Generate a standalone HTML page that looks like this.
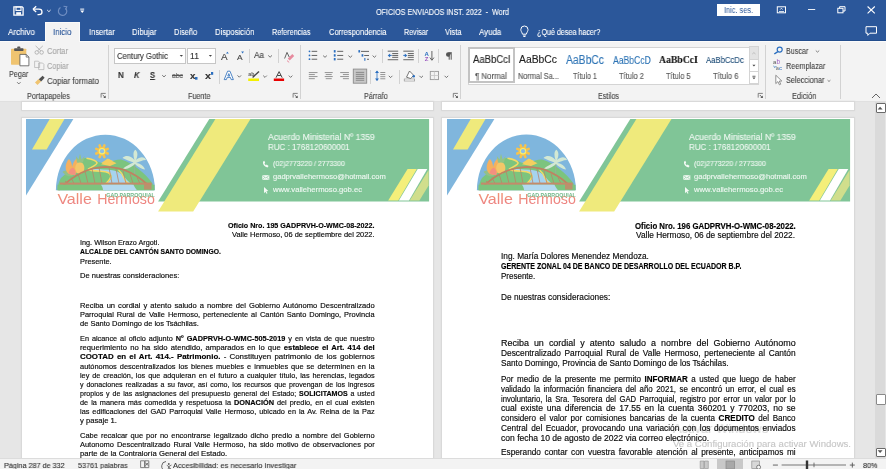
<!DOCTYPE html>
<html><head><meta charset="utf-8"><style>
*{margin:0;padding:0;box-sizing:border-box}
html,body{width:886px;height:469px;overflow:hidden}
body{position:relative;background:#e6e6e6;font-family:"Liberation Sans",sans-serif;color:#444}
.a{position:absolute;white-space:pre;will-change:transform}
.ln{position:absolute;white-space:nowrap;color:#1a1a1a;font-family:"Liberation Sans",sans-serif}
.j{text-align:justify;text-align-last:justify;white-space:normal;overflow:hidden}
.ln b{font-weight:bold;color:#000}
svg{position:absolute;overflow:visible}
</style></head><body>
<div class="a" style="left:0px;top:0px;width:886px;height:41px;background:#2b579a;"></div>
<div class="a" style="left:0px;top:40px;width:886px;height:1px;background:#224d8c;"></div>
<div class="a" style="left:0px;top:41px;width:886px;height:60px;background:#f3f3f3;"></div>
<div class="a" style="left:0px;top:41px;width:886px;height:1px;background:#fbfbfb;"></div>
<div class="a" style="left:45px;top:22px;width:35px;height:20px;background:#f3f3f3;border:1px solid #fafafa;border-bottom:none;"></div>
<div class="a" style="left:0px;top:101px;width:886px;height:1px;background:#e0e0e0;"></div>
<div class="a" style="left:376.00px;top:6.82px;font-size:9px;line-height:10.80px;color:#fff;font-family:'Liberation Sans',sans-serif;-webkit-text-stroke:0.12px #fff;transform:scaleX(0.7946);transform-origin:0 0;">OFICIOS ENVIADOS INST. 2022  -  Word</div>
<div class="a" style="left:717px;top:4px;width:43px;height:12px;background:#fff;"></div>
<div class="a" style="left:724.00px;top:5.21px;font-size:8.5px;line-height:10.20px;color:#2b579a;font-family:'Liberation Sans',sans-serif;transform:scaleX(0.8647);transform-origin:0 0;">Inic. ses.</div>
<div class="a" style="left:8.10px;top:26.88px;font-size:8.9px;line-height:10.68px;color:#fff;font-family:'Liberation Sans',sans-serif;-webkit-text-stroke:0.12px #fff;transform:scaleX(0.9064);transform-origin:0 0;">Archivo</div>
<div class="a" style="left:88.50px;top:26.88px;font-size:8.9px;line-height:10.68px;color:#fff;font-family:'Liberation Sans',sans-serif;-webkit-text-stroke:0.12px #fff;transform:scaleX(0.8551);transform-origin:0 0;">Insertar</div>
<div class="a" style="left:131.70px;top:26.88px;font-size:8.9px;line-height:10.68px;color:#fff;font-family:'Liberation Sans',sans-serif;-webkit-text-stroke:0.12px #fff;transform:scaleX(0.8689);transform-origin:0 0;">Dibujar</div>
<div class="a" style="left:173.70px;top:26.88px;font-size:8.9px;line-height:10.68px;color:#fff;font-family:'Liberation Sans',sans-serif;-webkit-text-stroke:0.12px #fff;transform:scaleX(0.8374);transform-origin:0 0;">Diseño</div>
<div class="a" style="left:214.60px;top:26.88px;font-size:8.9px;line-height:10.68px;color:#fff;font-family:'Liberation Sans',sans-serif;-webkit-text-stroke:0.12px #fff;transform:scaleX(0.8679);transform-origin:0 0;">Disposición</div>
<div class="a" style="left:271.80px;top:26.88px;font-size:8.9px;line-height:10.68px;color:#fff;font-family:'Liberation Sans',sans-serif;-webkit-text-stroke:0.12px #fff;transform:scaleX(0.8128);transform-origin:0 0;">Referencias</div>
<div class="a" style="left:328.50px;top:26.88px;font-size:8.9px;line-height:10.68px;color:#fff;font-family:'Liberation Sans',sans-serif;-webkit-text-stroke:0.12px #fff;transform:scaleX(0.8483);transform-origin:0 0;">Correspondencia</div>
<div class="a" style="left:403.90px;top:26.88px;font-size:8.9px;line-height:10.68px;color:#fff;font-family:'Liberation Sans',sans-serif;-webkit-text-stroke:0.12px #fff;transform:scaleX(0.7988);transform-origin:0 0;">Revisar</div>
<div class="a" style="left:445.00px;top:26.88px;font-size:8.9px;line-height:10.68px;color:#fff;font-family:'Liberation Sans',sans-serif;-webkit-text-stroke:0.12px #fff;transform:scaleX(0.8407);transform-origin:0 0;">Vista</div>
<div class="a" style="left:478.80px;top:26.88px;font-size:8.9px;line-height:10.68px;color:#fff;font-family:'Liberation Sans',sans-serif;-webkit-text-stroke:0.12px #fff;transform:scaleX(0.8893);transform-origin:0 0;">Ayuda</div>
<div class="a" style="left:536.70px;top:26.88px;font-size:8.9px;line-height:10.68px;color:#fff;font-family:'Liberation Sans',sans-serif;-webkit-text-stroke:0.12px #fff;transform:scaleX(0.8072);transform-origin:0 0;">¿Qué desea hacer?</div>
<div class="a" style="left:52.50px;top:26.88px;font-size:8.9px;line-height:10.68px;color:#2b579a;font-family:'Liberation Sans',sans-serif;-webkit-text-stroke:0.12px #2b579a;transform:scaleX(0.8952);transform-origin:0 0;">Inicio</div>
<div class="a" style="left:9.00px;top:68.54px;font-size:8.8px;line-height:10.56px;color:#444;font-family:'Liberation Sans',sans-serif;-webkit-text-stroke:0.12px #444;transform:scaleX(0.8261);transform-origin:0 0;">Pegar</div>
<div class="a" style="left:47.00px;top:46.04px;font-size:8.8px;line-height:10.56px;color:#a6a6a6;font-family:'Liberation Sans',sans-serif;-webkit-text-stroke:0.12px #a6a6a6;transform:scaleX(0.8589);transform-origin:0 0;">Cortar</div>
<div class="a" style="left:47.00px;top:60.84px;font-size:8.8px;line-height:10.56px;color:#a6a6a6;font-family:'Liberation Sans',sans-serif;-webkit-text-stroke:0.12px #a6a6a6;transform:scaleX(0.8293);transform-origin:0 0;">Copiar</div>
<div class="a" style="left:47.00px;top:75.84px;font-size:8.8px;line-height:10.56px;color:#444;font-family:'Liberation Sans',sans-serif;-webkit-text-stroke:0.12px #444;transform:scaleX(0.8934);transform-origin:0 0;">Copiar formato</div>
<div class="a" style="left:27.00px;top:91.16px;font-size:8.6px;line-height:10.32px;color:#444;font-family:'Liberation Sans',sans-serif;-webkit-text-stroke:0.12px #444;transform:scaleX(0.8484);transform-origin:0 0;">Portapapeles</div>
<div class="a" style="left:188.30px;top:91.16px;font-size:8.6px;line-height:10.32px;color:#444;font-family:'Liberation Sans',sans-serif;-webkit-text-stroke:0.12px #444;transform:scaleX(0.8403);transform-origin:0 0;">Fuente</div>
<div class="a" style="left:363.90px;top:91.16px;font-size:8.6px;line-height:10.32px;color:#444;font-family:'Liberation Sans',sans-serif;-webkit-text-stroke:0.12px #444;transform:scaleX(0.8368);transform-origin:0 0;">Párrafo</div>
<div class="a" style="left:597.70px;top:91.16px;font-size:8.6px;line-height:10.32px;color:#444;font-family:'Liberation Sans',sans-serif;-webkit-text-stroke:0.12px #444;transform:scaleX(0.8251);transform-origin:0 0;">Estilos</div>
<div class="a" style="left:791.70px;top:91.16px;font-size:8.6px;line-height:10.32px;color:#444;font-family:'Liberation Sans',sans-serif;-webkit-text-stroke:0.12px #444;transform:scaleX(0.8615);transform-origin:0 0;">Edición</div>
<div class="a" style="left:785.60px;top:46.34px;font-size:8.8px;line-height:10.56px;color:#444;font-family:'Liberation Sans',sans-serif;-webkit-text-stroke:0.12px #444;transform:scaleX(0.8178);transform-origin:0 0;">Buscar</div>
<div class="a" style="left:785.60px;top:61.24px;font-size:8.8px;line-height:10.56px;color:#444;font-family:'Liberation Sans',sans-serif;-webkit-text-stroke:0.12px #444;transform:scaleX(0.8305);transform-origin:0 0;">Reemplazar</div>
<div class="a" style="left:785.60px;top:75.44px;font-size:8.8px;line-height:10.56px;color:#444;font-family:'Liberation Sans',sans-serif;-webkit-text-stroke:0.12px #444;transform:scaleX(0.8351);transform-origin:0 0;">Seleccionar</div>
<div class="a" style="left:114px;top:48px;width:72px;height:16px;background:#fff;border:1px solid #c6c6c6;"></div>
<div class="a" style="left:187px;top:48px;width:29px;height:16px;background:#fff;border:1px solid #c6c6c6;"></div>
<div class="a" style="left:116.50px;top:50.96px;font-size:8.6px;line-height:10.32px;color:#333;font-family:'Liberation Sans',sans-serif;-webkit-text-stroke:0.12px #333;transform:scaleX(0.8892);transform-origin:0 0;">Century Gothic</div>
<div class="a" style="left:189.80px;top:51.16px;font-size:8.6px;line-height:10.32px;color:#333;font-family:'Liberation Sans',sans-serif;-webkit-text-stroke:0.12px #333;">11</div>
<div class="a" style="left:108px;top:45px;width:1px;height:54px;background:#d2d2d2;"></div>
<div class="a" style="left:300px;top:45px;width:1px;height:54px;background:#d2d2d2;"></div>
<div class="a" style="left:460px;top:45px;width:1px;height:54px;background:#d2d2d2;"></div>
<div class="a" style="left:765px;top:45px;width:1px;height:54px;background:#d2d2d2;"></div>
<div class="a" style="left:840px;top:45px;width:1px;height:54px;background:#d2d2d2;"></div>
<div class="a" style="left:249px;top:49px;width:1px;height:14px;background:#d2d2d2;"></div>
<div class="a" style="left:278px;top:49px;width:1px;height:14px;background:#d2d2d2;"></div>
<div class="a" style="left:219px;top:70px;width:1px;height:14px;background:#d2d2d2;"></div>
<div class="a" style="left:382px;top:49px;width:1px;height:14px;background:#d2d2d2;"></div>
<div class="a" style="left:418px;top:49px;width:1px;height:14px;background:#d2d2d2;"></div>
<div class="a" style="left:438px;top:49px;width:1px;height:14px;background:#d2d2d2;"></div>
<div class="a" style="left:370px;top:70px;width:1px;height:14px;background:#d2d2d2;"></div>
<div class="a" style="left:399px;top:70px;width:1px;height:14px;background:#d2d2d2;"></div>
<div class="a" style="left:467.6px;top:46.6px;width:291.4px;height:37.800000000000004px;background:#fff;border:1px solid #d4d4d4;"></div>
<div class="a" style="left:468px;top:47px;width:47px;height:36px;background:transparent;border:2px solid #c3c3c3;"></div>
<div class="a" style="left:749px;top:46px;width:10px;height:14px;background:#e3e3e3;border:1px solid #d4d4d4;"></div>
<div class="a" style="left:749px;top:59px;width:10px;height:13px;background:#fff;border:1px solid #d4d4d4;"></div>
<div class="a" style="left:749px;top:71px;width:10px;height:13px;background:#fff;border:1px solid #d4d4d4;"></div>
<div class="a" style="left:472.50px;top:53.73px;font-size:10px;line-height:12.00px;color:#222;font-family:'Liberation Sans',sans-serif;-webkit-text-stroke:0.12px #222;transform:scaleX(0.9502);transform-origin:0 0;">AaBbCcI</div>
<div class="a" style="left:519.00px;top:54.14px;font-size:10px;line-height:12.00px;color:#222;font-family:'Liberation Sans',sans-serif;-webkit-text-stroke:0.12px #222;transform:scaleX(1.0358);transform-origin:0 0;">AaBbCc</div>
<div class="a" style="left:566.00px;top:52.67px;font-size:12.5px;line-height:15.00px;color:#2e74b5;font-family:'Liberation Sans',sans-serif;-webkit-text-stroke:0.12px #2e74b5;transform:scaleX(0.8287);transform-origin:0 0;">AaBbCc</div>
<div class="a" style="left:612.80px;top:53.84px;font-size:10.5px;line-height:12.60px;color:#2e74b5;font-family:'Liberation Sans',sans-serif;-webkit-text-stroke:0.12px #2e74b5;transform:scaleX(0.8199);transform-origin:0 0;">AaBbCcD</div>
<div class="a" style="left:659.20px;top:52.92px;font-size:11px;line-height:13.20px;color:#111;font-family:'Liberation Serif',serif;font-weight:bold;-webkit-text-stroke:0.12px #111;transform:scaleX(0.8817);transform-origin:0 0;">AaBbCcI</div>
<div class="a" style="left:706.20px;top:54.43px;font-size:9.5px;line-height:11.40px;color:#1f4d78;font-family:'Liberation Sans',sans-serif;-webkit-text-stroke:0.12px #1f4d78;transform:scaleX(0.8136);transform-origin:0 0;">AaBbCcDc</div>
<div class="a" style="left:475.00px;top:71.07px;font-size:8.4px;line-height:10.08px;color:#555;font-family:'Liberation Sans',sans-serif;-webkit-text-stroke:0.12px #555;transform:scaleX(0.9435);transform-origin:0 0;">¶ Normal</div>
<div class="a" style="left:518.00px;top:71.07px;font-size:8.4px;line-height:10.08px;color:#555;font-family:'Liberation Sans',sans-serif;-webkit-text-stroke:0.12px #555;transform:scaleX(0.8783);transform-origin:0 0;">Normal Sa...</div>
<div class="a" style="left:573.00px;top:71.07px;font-size:8.4px;line-height:10.08px;color:#555;font-family:'Liberation Sans',sans-serif;-webkit-text-stroke:0.12px #555;transform:scaleX(0.8567);transform-origin:0 0;">Título 1</div>
<div class="a" style="left:619.00px;top:71.07px;font-size:8.4px;line-height:10.08px;color:#555;font-family:'Liberation Sans',sans-serif;-webkit-text-stroke:0.12px #555;transform:scaleX(0.8924);transform-origin:0 0;">Título 2</div>
<div class="a" style="left:666.00px;top:71.07px;font-size:8.4px;line-height:10.08px;color:#555;font-family:'Liberation Sans',sans-serif;-webkit-text-stroke:0.12px #555;transform:scaleX(0.8781);transform-origin:0 0;">Título 5</div>
<div class="a" style="left:712.50px;top:71.07px;font-size:8.4px;line-height:10.08px;color:#555;font-family:'Liberation Sans',sans-serif;-webkit-text-stroke:0.12px #555;transform:scaleX(0.9103);transform-origin:0 0;">Título 6</div>
<div class="a" style="left:21.5px;top:102px;width:410.5px;height:7.5px;background:#fff;box-shadow:0 0 0 1px #d9d9d9,0 0 1.5px 1px #dcdcdc;"></div>
<div class="a" style="left:21.5px;top:117.5px;width:410.5px;height:362.5px;background:#fff;box-shadow:0 0 0 1px #d9d9d9,0 0 1.5px 1px #dcdcdc;"></div>
<div class="a" style="left:442px;top:102px;width:411.5px;height:7.5px;background:#fff;box-shadow:0 0 0 1px #d9d9d9,0 0 1.5px 1px #dcdcdc;"></div>
<div class="a" style="left:442px;top:117.5px;width:411.5px;height:362.5px;background:#fff;box-shadow:0 0 0 1px #d9d9d9,0 0 1.5px 1px #dcdcdc;"></div>
<div class="a" style="left:875px;top:102px;width:10px;height:356px;background:#dadada;"></div>
<div class="a" style="left:875.5px;top:393.6px;width:10.0px;height:11.399999999999977px;background:#fff;border:1px solid #8a8a8a;border-radius:1px;"></div>
<div class="a" style="left:875.5px;top:103.2px;width:10.0px;height:9.599999999999994px;background:#fff;border:1px solid #6a6a6a;border-radius:1px;"></div>
<div class="a" style="left:875.5px;top:447.6px;width:10.0px;height:9.0px;background:#fff;border:1px solid #6a6a6a;border-radius:1px;"></div>
<div class="a" style="left:672.50px;top:421.02px;font-size:13.6px;line-height:16.32px;color:#d9d9d9;font-family:'Liberation Sans',sans-serif;-webkit-text-stroke:0.12px #d9d9d9;transform:scaleX(0.9481);transform-origin:0 0;">Activar Windows</div>
<div class="a" style="left:672.70px;top:438.94px;font-size:8.8px;line-height:10.56px;color:#c6c6c6;font-family:'Liberation Sans',sans-serif;-webkit-text-stroke:0.12px #c6c6c6;transform:scaleX(1.0901);transform-origin:0 0;">Ve a Configuración para activar Windows.</div>
<svg style="left:0;top:0" width="886" height="469" viewBox="0 0 886 469"><polygon points="26.0,119.0 73.4,119.0 26.0,195.5" fill="#80b6dd"/><polygon points="49.7,119.0 64.5,119.0 46.6,149.4 32.0,149.4" fill="#efea7c"/><polygon points="209.3,119.0 429.1,119.0 429.1,201.6 158.1,201.6" fill="#80c597"/><polygon points="215.4,119.0 250.5,119.0 193.2,211.4 158.1,211.4" fill="#efea7c"/><polygon points="407.6,169.0 416.8,169.0 398.2,200.4 388.2,200.4" fill="#f4ef7a"/><polygon points="417.7,169.0 427.3,169.0 409.0,200.4 398.9,200.4" fill="#ffffff"/><polygon points="428.6,169.9 428.6,185.6 419.4,200.4 409.7,200.4" fill="#d0de8c"/><path d="M55.9,190.2 A49.5,55.6 0 0 1 154.9,190.2 Z" fill="#7fb6dd"/><path d="M 100.5,163.5 L 107.7,158.6 L 116.0,162.5 Z" fill="#f3cf5e"/><path d="M 57.5,190.2 C 58.0,185 59.0,181 61.0,178 C 70.0,170 78.0,161 85.0,158 C 90.0,158 95.0,160 100.0,162.5 L 106.0,164 C 111.0,161 116.0,159.5 121.0,159.5 C 133.0,163 145.0,173 152.5,183.5 L 154.2,190.2 Z" fill="#7cc47e"/><path d="M 90.0,170.5 C 97.0,171.5 104.0,171 108.0,172.5 C 112.0,174 113.0,177 110.0,180 C 107.0,183 104.0,186 103.0,190.2 L 137.0,190.2 C 134.0,186 130.0,183 127.0,180 C 124.0,176 120.0,172 114.0,170.5 C 108.0,169.5 100.0,169 91.0,169 Z" fill="#a6d3ef"/><path d="M 86.5,158.3 C 91.0,159 96.0,160.5 97.0,162.8 C 97.5,165 90.0,167.5 88.5,169 C 88.0,170.5 95.0,171 101.0,171.2 C 108.0,171.4 111.0,173.5 110.8,176.5 C 110.5,180 106.0,183 104.0,186 C 103.0,188 102.6,189.5 102.6,190.2" stroke="#f5da66" stroke-width="1.6" fill="none"/><path d="M 118.5,170 C 121.0,172 123.0,175 124.0,178 C 125.0,181 127.0,183 129.0,184" stroke="#f5da66" stroke-width="1.4" fill="none"/><line x1="102" y1="151.2" x2="107.73" y2="153.57" stroke="#f6c34e" stroke-width="2.6" stroke-linecap="round"/><line x1="102" y1="151.2" x2="104.37" y2="156.93" stroke="#f6c34e" stroke-width="2.6" stroke-linecap="round"/><line x1="102" y1="151.2" x2="99.63" y2="156.93" stroke="#f6c34e" stroke-width="2.6" stroke-linecap="round"/><line x1="102" y1="151.2" x2="96.27" y2="153.57" stroke="#f6c34e" stroke-width="2.6" stroke-linecap="round"/><line x1="102" y1="151.2" x2="96.27" y2="148.83" stroke="#f6c34e" stroke-width="2.6" stroke-linecap="round"/><line x1="102" y1="151.2" x2="99.63" y2="145.47" stroke="#f6c34e" stroke-width="2.6" stroke-linecap="round"/><line x1="102" y1="151.2" x2="104.37" y2="145.47" stroke="#f6c34e" stroke-width="2.6" stroke-linecap="round"/><line x1="102" y1="151.2" x2="107.73" y2="148.83" stroke="#f6c34e" stroke-width="2.6" stroke-linecap="round"/><circle cx="102" cy="151.2" r="4.3" fill="#f6c34e"/><circle cx="102" cy="151.2" r="3.2" fill="#fbf06a"/><circle cx="102" cy="151.2" r="2.1" fill="#8fc0e4"/><path d="M 101.0,164.2 L 108.5,159 L 116.5,163.2 L 110.0,166 Z" fill="#f4cf5f"/><path d="M 62.5,172 C 65.0,169.5 70.0,170 74.0,174 C 72.0,177.5 66.0,177 62.5,172 Z" fill="#93c087"/><path d="M 66.0,170 C 65.0,165 67.0,161 69.0,159 C 71.0,161 72.0,164 72.0,167 C 73.0,163 75.0,159.5 77.0,158 C 78.0,162 78.0,168 77.0,172 C 75.0,176 68.0,176 66.0,170 Z" fill="#f5b05e"/><path d="M 68.5,173.5 C 69.0,170 71.0,168 73.0,167.5 C 75.0,169 76.0,172 75.5,175.5 Z" fill="#f39080"/><ellipse cx="79.8" cy="168" rx="4.6" ry="6" fill="#f4c768"/><path d="M 77.0,162.5 L 75.8,156 L 78.6,159.5 L 80.0,153.8 L 81.6,159.5 L 84.6,156 L 83.0,162.5 Z" fill="#93c486"/><path d="M 134.5,175 L 134.8,160" stroke="#8fb58f" stroke-width="1.4"/><path d="M 122.5,158 C 126.0,154.5 131.0,156 134.5,160 C 133.0,155 133.0,151 135.5,149.8 C 138.0,152 138.0,156 136.0,160 C 140.0,156 145.0,156.5 146.0,160 C 142.0,160 139.0,162 136.0,163 C 140.0,163 144.0,166 145.0,169.5 C 141.0,169 137.0,166 135.0,164 C 132.0,167 127.0,170 123.0,168.5 C 126.0,166 130.0,164 133.5,162.5 C 130.0,161 126.0,160 122.5,158 Z" fill="#d3e8d3"/><line x1="68" y1="183.5" x2="65" y2="181" stroke="#b98266" stroke-width="0.75"/><line x1="74" y1="183.5" x2="71" y2="177.5" stroke="#b98266" stroke-width="0.75"/><line x1="81" y1="183.5" x2="78" y2="173.8" stroke="#b98266" stroke-width="0.75"/><line x1="88" y1="183.5" x2="85" y2="171" stroke="#b98266" stroke-width="0.75"/><line x1="95" y1="183.5" x2="92" y2="168.8" stroke="#b98266" stroke-width="0.75"/><line x1="102" y1="183.5" x2="99" y2="167.5" stroke="#b98266" stroke-width="0.75"/><line x1="112" y1="183.5" x2="109" y2="167.5" stroke="#b98266" stroke-width="0.75"/><line x1="119" y1="183.5" x2="116" y2="168.8" stroke="#b98266" stroke-width="0.75"/><line x1="126" y1="183.5" x2="123" y2="171" stroke="#b98266" stroke-width="0.75"/><line x1="133" y1="183.5" x2="130" y2="173.8" stroke="#b98266" stroke-width="0.75"/><line x1="140" y1="183.5" x2="137" y2="177.5" stroke="#b98266" stroke-width="0.75"/><line x1="146" y1="183.5" x2="143" y2="181" stroke="#b98266" stroke-width="0.75"/><path d="M 58.5,190 C 72.0,176 88.0,167 106.0,166.8 C 124.0,167 140.0,176 152.5,189.5" stroke="#bf8262" stroke-width="1.8" fill="none"/><rect x="60" y="182.6" width="91.5" height="2.2" fill="#c48a6a"/><rect x="57.5" y="184.8" width="97" height="5.4" fill="#7cc47e"/><path d="M 101.0,184.8 C 102.5,187 103.0,188.5 103.0,190.2 L 137.0,190.2 C 135.0,188 134.0,186 133.5,184.8 Z" fill="#b2d9f0"/><rect x="144" y="183" width="7.5" height="6.5" fill="#c48a6a" opacity="0.85"/><path d="M 263.2,161.5 C 262.3,163.5 264.0,166.5 267.5,167.5 L 268.6,166 L 266.6,164.6 L 265.8,165.2 C 265.0,164.7 264.6,164 264.5,163.3 L 265.2,162.6 L 264.2,160.8 Z" fill="#f4faf5"/><path d="M 262.3,175.2 L 269.3,175.2 L 269.3,179.8 L 262.3,179.8 Z" fill="#f4faf5"/><path d="M 262.5,175.5 L 265.8,178 L 269.1,175.5 M 262.5,179.5 L 264.8,177.4 M 269.1,179.5 L 266.8,177.4" stroke="#80c597" stroke-width="0.6" fill="none"/><path d="M 264.0,187 L 264.0,193.3 L 265.4,191.7 L 266.6,193.8 L 267.5,193.3 L 266.4,191.3 L 268.3,191 Z" fill="#f4faf5"/><defs><linearGradient id="vh0" x1="0" y1="0" x2="0" y2="1"><stop offset="0" stop-color="#f29a74"/><stop offset="1" stop-color="#ec7c84"/></linearGradient></defs><text x="57.4" y="203.6" font-family="Liberation Sans" font-size="14.6" fill="url(#vh0)" textLength="34.4" lengthAdjust="spacingAndGlyphs">Valle</text><text x="97.2" y="203.6" font-family="Liberation Sans" font-size="14.6" fill="url(#vh0)" textLength="57.6" lengthAdjust="spacingAndGlyphs">Hermoso</text><text x="106.3" y="196.5" font-family="Liberation Sans" font-weight="bold" font-size="5.4" fill="#72b98a" textLength="48.5" lengthAdjust="spacingAndGlyphs">GAD PARROQUIAL</text></svg>
<div class="a" style="left:267.50px;top:131.78px;font-size:8.9px;line-height:10.68px;color:#eef7f1;font-family:'Liberation Sans',sans-serif;-webkit-text-stroke:0.12px #eef7f1;transform:scaleX(0.9736);transform-origin:0 0;">Acuerdo Ministerial Nº 1359</div>
<div class="a" style="left:267.50px;top:141.88px;font-size:8.9px;line-height:10.68px;color:#eef7f1;font-family:'Liberation Sans',sans-serif;-webkit-text-stroke:0.12px #eef7f1;transform:scaleX(0.8995);transform-origin:0 0;">RUC : 1768120600001</div>
<div class="a" style="left:273.40px;top:159.98px;font-size:7.2px;line-height:8.64px;color:#eef7f1;font-family:'Liberation Sans',sans-serif;-webkit-text-stroke:0.12px #eef7f1;transform:scaleX(0.9617);transform-origin:0 0;">(02)2773220 / 2773300</div>
<div class="a" style="left:273.00px;top:172.78px;font-size:7.2px;line-height:8.64px;color:#eef7f1;font-family:'Liberation Sans',sans-serif;-webkit-text-stroke:0.12px #eef7f1;transform:scaleX(1.0516);transform-origin:0 0;">gadprvallehermoso@hotmail.com</div>
<div class="a" style="left:273.00px;top:185.58px;font-size:7.2px;line-height:8.64px;color:#eef7f1;font-family:'Liberation Sans',sans-serif;-webkit-text-stroke:0.12px #eef7f1;transform:scaleX(1.0664);transform-origin:0 0;">www.vallehermoso.gob.ec</div>
<svg style="left:0;top:0" width="886" height="469" viewBox="0 0 886 469"><polygon points="447.0,119.0 494.4,119.0 447.0,195.5" fill="#80b6dd"/><polygon points="470.7,119.0 485.5,119.0 467.6,149.4 453.0,149.4" fill="#efea7c"/><polygon points="630.3,119.0 850.1,119.0 850.1,201.6 579.1,201.6" fill="#80c597"/><polygon points="636.4,119.0 671.5,119.0 614.2,211.4 579.1,211.4" fill="#efea7c"/><polygon points="828.6,169.0 837.8,169.0 819.2,200.4 809.2,200.4" fill="#f4ef7a"/><polygon points="838.7,169.0 848.3,169.0 830.0,200.4 819.9,200.4" fill="#ffffff"/><polygon points="849.6,169.9 849.6,185.6 840.4,200.4 830.7,200.4" fill="#d0de8c"/><path d="M476.9,190.2 A49.5,55.6 0 0 1 575.9,190.2 Z" fill="#7fb6dd"/><path d="M 521.5,163.5 L 528.7,158.6 L 537.0,162.5 Z" fill="#f3cf5e"/><path d="M 478.5,190.2 C 479.0,185 480.0,181 482.0,178 C 491.0,170 499.0,161 506.0,158 C 511.0,158 516.0,160 521.0,162.5 L 527.0,164 C 532.0,161 537.0,159.5 542.0,159.5 C 554.0,163 566.0,173 573.5,183.5 L 575.2,190.2 Z" fill="#7cc47e"/><path d="M 511.0,170.5 C 518.0,171.5 525.0,171 529.0,172.5 C 533.0,174 534.0,177 531.0,180 C 528.0,183 525.0,186 524.0,190.2 L 558.0,190.2 C 555.0,186 551.0,183 548.0,180 C 545.0,176 541.0,172 535.0,170.5 C 529.0,169.5 521.0,169 512.0,169 Z" fill="#a6d3ef"/><path d="M 507.5,158.3 C 512.0,159 517.0,160.5 518.0,162.8 C 518.5,165 511.0,167.5 509.5,169 C 509.0,170.5 516.0,171 522.0,171.2 C 529.0,171.4 532.0,173.5 531.8,176.5 C 531.5,180 527.0,183 525.0,186 C 524.0,188 523.6,189.5 523.6,190.2" stroke="#f5da66" stroke-width="1.6" fill="none"/><path d="M 539.5,170 C 542.0,172 544.0,175 545.0,178 C 546.0,181 548.0,183 550.0,184" stroke="#f5da66" stroke-width="1.4" fill="none"/><line x1="523" y1="151.2" x2="528.73" y2="153.57" stroke="#f6c34e" stroke-width="2.6" stroke-linecap="round"/><line x1="523" y1="151.2" x2="525.37" y2="156.93" stroke="#f6c34e" stroke-width="2.6" stroke-linecap="round"/><line x1="523" y1="151.2" x2="520.63" y2="156.93" stroke="#f6c34e" stroke-width="2.6" stroke-linecap="round"/><line x1="523" y1="151.2" x2="517.27" y2="153.57" stroke="#f6c34e" stroke-width="2.6" stroke-linecap="round"/><line x1="523" y1="151.2" x2="517.27" y2="148.83" stroke="#f6c34e" stroke-width="2.6" stroke-linecap="round"/><line x1="523" y1="151.2" x2="520.63" y2="145.47" stroke="#f6c34e" stroke-width="2.6" stroke-linecap="round"/><line x1="523" y1="151.2" x2="525.37" y2="145.47" stroke="#f6c34e" stroke-width="2.6" stroke-linecap="round"/><line x1="523" y1="151.2" x2="528.73" y2="148.83" stroke="#f6c34e" stroke-width="2.6" stroke-linecap="round"/><circle cx="523" cy="151.2" r="4.3" fill="#f6c34e"/><circle cx="523" cy="151.2" r="3.2" fill="#fbf06a"/><circle cx="523" cy="151.2" r="2.1" fill="#8fc0e4"/><path d="M 522.0,164.2 L 529.5,159 L 537.5,163.2 L 531.0,166 Z" fill="#f4cf5f"/><path d="M 483.5,172 C 486.0,169.5 491.0,170 495.0,174 C 493.0,177.5 487.0,177 483.5,172 Z" fill="#93c087"/><path d="M 487.0,170 C 486.0,165 488.0,161 490.0,159 C 492.0,161 493.0,164 493.0,167 C 494.0,163 496.0,159.5 498.0,158 C 499.0,162 499.0,168 498.0,172 C 496.0,176 489.0,176 487.0,170 Z" fill="#f5b05e"/><path d="M 489.5,173.5 C 490.0,170 492.0,168 494.0,167.5 C 496.0,169 497.0,172 496.5,175.5 Z" fill="#f39080"/><ellipse cx="500.8" cy="168" rx="4.6" ry="6" fill="#f4c768"/><path d="M 498.0,162.5 L 496.8,156 L 499.6,159.5 L 501.0,153.8 L 502.6,159.5 L 505.6,156 L 504.0,162.5 Z" fill="#93c486"/><path d="M 555.5,175 L 555.8,160" stroke="#8fb58f" stroke-width="1.4"/><path d="M 543.5,158 C 547.0,154.5 552.0,156 555.5,160 C 554.0,155 554.0,151 556.5,149.8 C 559.0,152 559.0,156 557.0,160 C 561.0,156 566.0,156.5 567.0,160 C 563.0,160 560.0,162 557.0,163 C 561.0,163 565.0,166 566.0,169.5 C 562.0,169 558.0,166 556.0,164 C 553.0,167 548.0,170 544.0,168.5 C 547.0,166 551.0,164 554.5,162.5 C 551.0,161 547.0,160 543.5,158 Z" fill="#d3e8d3"/><line x1="489" y1="183.5" x2="486" y2="181" stroke="#b98266" stroke-width="0.75"/><line x1="495" y1="183.5" x2="492" y2="177.5" stroke="#b98266" stroke-width="0.75"/><line x1="502" y1="183.5" x2="499" y2="173.8" stroke="#b98266" stroke-width="0.75"/><line x1="509" y1="183.5" x2="506" y2="171" stroke="#b98266" stroke-width="0.75"/><line x1="516" y1="183.5" x2="513" y2="168.8" stroke="#b98266" stroke-width="0.75"/><line x1="523" y1="183.5" x2="520" y2="167.5" stroke="#b98266" stroke-width="0.75"/><line x1="533" y1="183.5" x2="530" y2="167.5" stroke="#b98266" stroke-width="0.75"/><line x1="540" y1="183.5" x2="537" y2="168.8" stroke="#b98266" stroke-width="0.75"/><line x1="547" y1="183.5" x2="544" y2="171" stroke="#b98266" stroke-width="0.75"/><line x1="554" y1="183.5" x2="551" y2="173.8" stroke="#b98266" stroke-width="0.75"/><line x1="561" y1="183.5" x2="558" y2="177.5" stroke="#b98266" stroke-width="0.75"/><line x1="567" y1="183.5" x2="564" y2="181" stroke="#b98266" stroke-width="0.75"/><path d="M 479.5,190 C 493.0,176 509.0,167 527.0,166.8 C 545.0,167 561.0,176 573.5,189.5" stroke="#bf8262" stroke-width="1.8" fill="none"/><rect x="481" y="182.6" width="91.5" height="2.2" fill="#c48a6a"/><rect x="478.5" y="184.8" width="97" height="5.4" fill="#7cc47e"/><path d="M 522.0,184.8 C 523.5,187 524.0,188.5 524.0,190.2 L 558.0,190.2 C 556.0,188 555.0,186 554.5,184.8 Z" fill="#b2d9f0"/><rect x="565" y="183" width="7.5" height="6.5" fill="#c48a6a" opacity="0.85"/><path d="M 684.2,161.5 C 683.3,163.5 685.0,166.5 688.5,167.5 L 689.6,166 L 687.6,164.6 L 686.8,165.2 C 686.0,164.7 685.6,164 685.5,163.3 L 686.2,162.6 L 685.2,160.8 Z" fill="#f4faf5"/><path d="M 683.3,175.2 L 690.3,175.2 L 690.3,179.8 L 683.3,179.8 Z" fill="#f4faf5"/><path d="M 683.5,175.5 L 686.8,178 L 690.1,175.5 M 683.5,179.5 L 685.8,177.4 M 690.1,179.5 L 687.8,177.4" stroke="#80c597" stroke-width="0.6" fill="none"/><path d="M 685.0,187 L 685.0,193.3 L 686.4,191.7 L 687.6,193.8 L 688.5,193.3 L 687.4,191.3 L 689.3,191 Z" fill="#f4faf5"/><defs><linearGradient id="vh421" x1="0" y1="0" x2="0" y2="1"><stop offset="0" stop-color="#f29a74"/><stop offset="1" stop-color="#ec7c84"/></linearGradient></defs><text x="478.4" y="203.6" font-family="Liberation Sans" font-size="14.6" fill="url(#vh421)" textLength="34.4" lengthAdjust="spacingAndGlyphs">Valle</text><text x="518.2" y="203.6" font-family="Liberation Sans" font-size="14.6" fill="url(#vh421)" textLength="57.6" lengthAdjust="spacingAndGlyphs">Hermoso</text><text x="527.3" y="196.5" font-family="Liberation Sans" font-weight="bold" font-size="5.4" fill="#72b98a" textLength="48.5" lengthAdjust="spacingAndGlyphs">GAD PARROQUIAL</text></svg>
<div class="a" style="left:688.50px;top:131.78px;font-size:8.9px;line-height:10.68px;color:#eef7f1;font-family:'Liberation Sans',sans-serif;-webkit-text-stroke:0.12px #eef7f1;transform:scaleX(0.9736);transform-origin:0 0;">Acuerdo Ministerial Nº 1359</div>
<div class="a" style="left:688.50px;top:141.88px;font-size:8.9px;line-height:10.68px;color:#eef7f1;font-family:'Liberation Sans',sans-serif;-webkit-text-stroke:0.12px #eef7f1;transform:scaleX(0.8995);transform-origin:0 0;">RUC : 1768120600001</div>
<div class="a" style="left:694.40px;top:159.98px;font-size:7.2px;line-height:8.64px;color:#eef7f1;font-family:'Liberation Sans',sans-serif;-webkit-text-stroke:0.12px #eef7f1;transform:scaleX(0.9617);transform-origin:0 0;">(02)2773220 / 2773300</div>
<div class="a" style="left:694.00px;top:172.78px;font-size:7.2px;line-height:8.64px;color:#eef7f1;font-family:'Liberation Sans',sans-serif;-webkit-text-stroke:0.12px #eef7f1;transform:scaleX(1.0516);transform-origin:0 0;">gadprvallehermoso@hotmail.com</div>
<div class="a" style="left:694.00px;top:185.58px;font-size:7.2px;line-height:8.64px;color:#eef7f1;font-family:'Liberation Sans',sans-serif;-webkit-text-stroke:0.12px #eef7f1;transform:scaleX(1.0664);transform-origin:0 0;">www.vallehermoso.gob.ec</div>
<div class="ln" style="left:228.00px;top:220.77px;font-size:7.9px;line-height:9.48px;color:#0a0a0a;white-space:pre;-webkit-text-stroke:0.16px #0a0a0a;transform:scaleX(0.9034);transform-origin:0 0;"><b>Oficio Nro. 195 GADPRVH-O-WMC-08-2022.</b></div>
<div class="ln" style="left:231.90px;top:229.97px;font-size:7.9px;line-height:9.48px;color:#0a0a0a;white-space:pre;-webkit-text-stroke:0.16px #0a0a0a;transform:scaleX(0.9428);transform-origin:0 0;">Valle Hermoso, 06 de septiembre del 2022.</div>
<div class="ln" style="left:79.60px;top:237.67px;font-size:7.9px;line-height:9.48px;color:#0a0a0a;white-space:pre;-webkit-text-stroke:0.16px #0a0a0a;transform:scaleX(0.9202);transform-origin:0 0;">Ing. Wilson Erazo Argoti.</div>
<div class="ln" style="left:79.60px;top:247.27px;font-size:7.9px;line-height:9.48px;color:#0a0a0a;white-space:pre;-webkit-text-stroke:0.16px #0a0a0a;transform:scaleX(0.8588);transform-origin:0 0;"><b>ALCALDE DEL CANTÓN SANTO DOMINGO.</b></div>
<div class="ln" style="left:79.60px;top:257.27px;font-size:7.9px;line-height:9.48px;color:#0a0a0a;white-space:pre;-webkit-text-stroke:0.16px #0a0a0a;transform:scaleX(0.9375);transform-origin:0 0;">Presente.</div>
<div class="ln" style="left:79.60px;top:270.67px;font-size:7.9px;line-height:9.48px;color:#0a0a0a;white-space:pre;-webkit-text-stroke:0.16px #0a0a0a;transform:scaleX(0.9551);transform-origin:0 0;">De nuestras consideraciones:</div>
<div class="ln" style="left:79.60px;top:300.67px;font-size:7.9px;line-height:9.48px;color:#0a0a0a;white-space:pre;-webkit-text-stroke:0.16px #0a0a0a;word-spacing:1.000px;transform:scaleX(0.9595);transform-origin:0 0;">Reciba un cordial y atento saludo a nombre del Gobierno Autónomo Descentralizado</div>
<div class="ln" style="left:79.60px;top:309.97px;font-size:7.9px;line-height:9.48px;color:#0a0a0a;white-space:pre;-webkit-text-stroke:0.16px #0a0a0a;word-spacing:1.000px;transform:scaleX(0.9416);transform-origin:0 0;">Parroquial Rural de Valle Hermoso, perteneciente al Cantón Santo Domingo, Provincia</div>
<div class="ln" style="left:79.60px;top:319.17px;font-size:7.9px;line-height:9.48px;color:#0a0a0a;white-space:pre;-webkit-text-stroke:0.16px #0a0a0a;transform:scaleX(0.9478);transform-origin:0 0;">de Santo Domingo de los Tsáchilas.</div>
<div class="ln" style="left:79.60px;top:333.97px;font-size:7.9px;line-height:9.48px;color:#0a0a0a;white-space:pre;-webkit-text-stroke:0.16px #0a0a0a;word-spacing:1.000px;transform:scaleX(0.9272);transform-origin:0 0;">En alcance al oficio adjunto <b>Nº GADPRVH-O-WMC-505-2019</b> y en vista de que nuestro</div>
<div class="ln" style="left:79.60px;top:342.77px;font-size:7.9px;line-height:9.48px;color:#0a0a0a;white-space:pre;-webkit-text-stroke:0.16px #0a0a0a;word-spacing:1.000px;transform:scaleX(0.9750);transform-origin:0 0;">requerimiento no ha sido atendido, amparados en lo que <b>establece el Art. 414 del</b></div>
<div class="ln" style="left:79.60px;top:351.97px;font-size:7.9px;line-height:9.48px;color:#0a0a0a;white-space:pre;-webkit-text-stroke:0.16px #0a0a0a;word-spacing:1.000px;transform:scaleX(1.0028);transform-origin:0 0;"><b>COOTAD en el Art. 414.- Patrimonio.</b> - Constituyen patrimonio de los gobiernos</div>
<div class="ln" style="left:79.60px;top:361.57px;font-size:7.9px;line-height:9.48px;color:#0a0a0a;white-space:pre;-webkit-text-stroke:0.16px #0a0a0a;word-spacing:1.000px;transform:scaleX(0.9420);transform-origin:0 0;">autónomos descentralizados los bienes muebles e inmuebles que se determinen en la</div>
<div class="ln" style="left:79.60px;top:370.97px;font-size:7.9px;line-height:9.48px;color:#0a0a0a;white-space:pre;-webkit-text-stroke:0.16px #0a0a0a;word-spacing:1.000px;transform:scaleX(0.9241);transform-origin:0 0;">ley de creación, los que adquieran en el futuro a cualquier título, las herencias, legados</div>
<div class="ln" style="left:79.60px;top:380.17px;font-size:7.9px;line-height:9.48px;color:#0a0a0a;white-space:pre;-webkit-text-stroke:0.16px #0a0a0a;word-spacing:1.000px;transform:scaleX(0.8970);transform-origin:0 0;">y donaciones realizadas a su favor, así como, los recursos que provengan de los ingresos</div>
<div class="ln" style="left:79.60px;top:389.07px;font-size:7.9px;line-height:9.48px;color:#0a0a0a;white-space:pre;-webkit-text-stroke:0.16px #0a0a0a;word-spacing:1.000px;transform:scaleX(0.8969);transform-origin:0 0;">propios y de las asignaciones del presupuesto general del Estado; <b>SOLICITAMOS</b> a usted</div>
<div class="ln" style="left:79.60px;top:398.27px;font-size:7.9px;line-height:9.48px;color:#0a0a0a;white-space:pre;-webkit-text-stroke:0.16px #0a0a0a;word-spacing:1.000px;transform:scaleX(0.9306);transform-origin:0 0;">de la manera más comedida y respetuosa la <b>DONACIÓN</b> del predio, en el cual existen</div>
<div class="ln" style="left:79.60px;top:407.27px;font-size:7.9px;line-height:9.48px;color:#0a0a0a;white-space:pre;-webkit-text-stroke:0.16px #0a0a0a;word-spacing:1.000px;transform:scaleX(0.9293);transform-origin:0 0;">las edificaciones del GAD Parroquial Valle Hermoso, ubicado en la Av. Reina de la Paz</div>
<div class="ln" style="left:79.60px;top:416.37px;font-size:7.9px;line-height:9.48px;color:#0a0a0a;white-space:pre;-webkit-text-stroke:0.16px #0a0a0a;transform:scaleX(0.9684);transform-origin:0 0;">y pasaje 1.</div>
<div class="ln" style="left:79.60px;top:430.67px;font-size:7.9px;line-height:9.48px;color:#0a0a0a;white-space:pre;-webkit-text-stroke:0.16px #0a0a0a;word-spacing:1.000px;transform:scaleX(0.9483);transform-origin:0 0;">Cabe recalcar que por no encontrarse legalizado dicho predio a nombre del Gobierno</div>
<div class="ln" style="left:79.60px;top:439.87px;font-size:7.9px;line-height:9.48px;color:#0a0a0a;white-space:pre;-webkit-text-stroke:0.16px #0a0a0a;word-spacing:1.000px;transform:scaleX(0.9443);transform-origin:0 0;">Autonomo Descentralizado Rural Valle Hermoso, ha sido motivo de observaciones por</div>
<div class="ln" style="left:79.60px;top:448.87px;font-size:7.9px;line-height:9.48px;color:#0a0a0a;white-space:pre;-webkit-text-stroke:0.16px #0a0a0a;transform:scaleX(0.9785);transform-origin:0 0;">parte de la Contraloría General del Estado.</div>
<div class="ln" style="left:634.60px;top:220.50px;font-size:8.7px;line-height:10.44px;color:#0a0a0a;white-space:pre;-webkit-text-stroke:0.16px #0a0a0a;transform:scaleX(0.9009);transform-origin:0 0;"><b>Oficio Nro. 196 GADPRVH-O-WMC-08-2022.</b></div>
<div class="ln" style="left:636.40px;top:229.90px;font-size:8.7px;line-height:10.44px;color:#0a0a0a;white-space:pre;-webkit-text-stroke:0.16px #0a0a0a;transform:scaleX(0.9551);transform-origin:0 0;">Valle Hermoso, 06 de septiembre del 2022.</div>
<div class="ln" style="left:500.60px;top:251.40px;font-size:8.7px;line-height:10.44px;color:#0a0a0a;white-space:pre;-webkit-text-stroke:0.16px #0a0a0a;transform:scaleX(0.9540);transform-origin:0 0;">Ing. María Dolores Menendez Mendoza.</div>
<div class="ln" style="left:500.60px;top:261.00px;font-size:8.7px;line-height:10.44px;color:#0a0a0a;white-space:pre;-webkit-text-stroke:0.16px #0a0a0a;transform:scaleX(0.8096);transform-origin:0 0;"><b>GERENTE ZONAL 04 DE BANCO DE DESARROLLO DEL ECUADOR B.P.</b></div>
<div class="ln" style="left:500.60px;top:271.40px;font-size:8.7px;line-height:10.44px;color:#0a0a0a;white-space:pre;-webkit-text-stroke:0.16px #0a0a0a;transform:scaleX(0.9211);transform-origin:0 0;">Presente.</div>
<div class="ln" style="left:500.60px;top:291.70px;font-size:8.7px;line-height:10.44px;color:#0a0a0a;white-space:pre;-webkit-text-stroke:0.16px #0a0a0a;transform:scaleX(0.9545);transform-origin:0 0;">De nuestras consideraciones:</div>
<div class="ln" style="left:500.60px;top:338.10px;font-size:8.7px;line-height:10.44px;color:#0a0a0a;white-space:pre;-webkit-text-stroke:0.16px #0a0a0a;word-spacing:2.475px;transform:scaleX(1.0300);transform-origin:0 0;">Reciba un cordial y atento saludo a nombre del Gobierno Autónomo</div>
<div class="ln" style="left:500.60px;top:348.10px;font-size:8.7px;line-height:10.44px;color:#0a0a0a;white-space:pre;-webkit-text-stroke:0.16px #0a0a0a;word-spacing:1.400px;transform:scaleX(0.9609);transform-origin:0 0;">Descentralizado Parroquial Rural de Valle Hermoso, perteneciente al Cantón</div>
<div class="ln" style="left:500.60px;top:358.40px;font-size:8.7px;line-height:10.44px;color:#0a0a0a;white-space:pre;-webkit-text-stroke:0.16px #0a0a0a;transform:scaleX(0.9450);transform-origin:0 0;">Santo Domingo, Provincia de Santo Domingo de los Tsáchilas.</div>
<div class="ln" style="left:500.60px;top:374.20px;font-size:8.7px;line-height:10.44px;color:#0a0a0a;white-space:pre;-webkit-text-stroke:0.16px #0a0a0a;word-spacing:1.400px;transform:scaleX(0.9248);transform-origin:0 0;">Por medio de la presente me permito <b>INFORMAR</b> a usted que luego de haber</div>
<div class="ln" style="left:500.60px;top:383.90px;font-size:8.7px;line-height:10.44px;color:#0a0a0a;white-space:pre;-webkit-text-stroke:0.16px #0a0a0a;word-spacing:1.400px;transform:scaleX(0.9095);transform-origin:0 0;">validado la información financiera del año 2021, se encontró un error, el cual es</div>
<div class="ln" style="left:500.60px;top:393.60px;font-size:8.7px;line-height:10.44px;color:#0a0a0a;white-space:pre;-webkit-text-stroke:0.16px #0a0a0a;word-spacing:1.400px;transform:scaleX(0.8850);transform-origin:0 0;">involuntario, la Sra. Tesorera del GAD Parroquial, registro por error un valor por lo</div>
<div class="ln" style="left:500.60px;top:403.30px;font-size:8.7px;line-height:10.44px;color:#0a0a0a;white-space:pre;-webkit-text-stroke:0.16px #0a0a0a;word-spacing:1.400px;transform:scaleX(0.9891);transform-origin:0 0;">cual existe una diferencia de 17.55 en la cuenta 360201 y 770203, no se</div>
<div class="ln" style="left:500.60px;top:413.30px;font-size:8.7px;line-height:10.44px;color:#0a0a0a;white-space:pre;-webkit-text-stroke:0.16px #0a0a0a;word-spacing:1.400px;transform:scaleX(0.9306);transform-origin:0 0;">considero el valor por comisiones bancarias de la cuenta <b>CREDITO</b> del Banco</div>
<div class="ln" style="left:500.60px;top:423.00px;font-size:8.7px;line-height:10.44px;color:#0a0a0a;white-space:pre;-webkit-text-stroke:0.16px #0a0a0a;word-spacing:1.400px;transform:scaleX(0.9500);transform-origin:0 0;">Central del Ecuador, provocando una variación con los documentos enviados</div>
<div class="ln" style="left:500.60px;top:432.70px;font-size:8.7px;line-height:10.44px;color:#0a0a0a;white-space:pre;-webkit-text-stroke:0.16px #0a0a0a;transform:scaleX(0.9837);transform-origin:0 0;">con fecha 10 de agosto de 2022 via correo electrónico.</div>
<div class="ln" style="left:500.60px;top:447.10px;font-size:8.7px;line-height:10.44px;color:#0a0a0a;white-space:pre;-webkit-text-stroke:0.16px #0a0a0a;word-spacing:1.400px;transform:scaleX(0.9501);transform-origin:0 0;">Esperando contar con vuestra favorable atención al presente, anticipamos mi</div>
<div class="a" style="left:0px;top:458px;width:886px;height:11px;background:#f3f3f3;border-top:1px solid #dcdcdc;"></div>
<div class="a" style="left:4.30px;top:460.74px;font-size:7.6px;line-height:9.12px;color:#333;font-family:'Liberation Sans',sans-serif;-webkit-text-stroke:0.12px #333;transform:scaleX(0.9512);transform-origin:0 0;">Página 287 de 332</div>
<div class="a" style="left:77.60px;top:460.74px;font-size:7.6px;line-height:9.12px;color:#333;font-family:'Liberation Sans',sans-serif;-webkit-text-stroke:0.12px #333;transform:scaleX(0.9504);transform-origin:0 0;">53761 palabras</div>
<div class="a" style="left:173.30px;top:460.74px;font-size:7.6px;line-height:9.12px;color:#333;font-family:'Liberation Sans',sans-serif;-webkit-text-stroke:0.12px #333;transform:scaleX(0.9777);transform-origin:0 0;">Accesibilidad: es necesario investigar</div>
<div class="a" style="left:862.60px;top:460.74px;font-size:7.6px;line-height:9.12px;color:#333;font-family:'Liberation Sans',sans-serif;-webkit-text-stroke:0.12px #333;transform:scaleX(0.9467);transform-origin:0 0;">80%</div>
<div class="a" style="left:717px;top:459px;width:26px;height:10px;background:#c8c8c8;"></div>
<svg style="left:0;top:0" width="886" height="469" viewBox="0 0 886 469" shape-rendering="geometricPrecision"><path d="M13.9,6.9 H22.2 L23.1,7.8 V15.1 H13.9 Z" fill="none" stroke="#fff" stroke-width="1.3"/><rect x="16" y="7" width="5" height="3.4" fill="none" stroke="#fff" stroke-width="1.1"/><rect x="16.2" y="12.2" width="4.8" height="2.6" fill="#fff"/><path d="M34,9.2 H39 C41.2,9.2 42,10.6 42,12 C42,13.6 40.8,14.6 39,14.6 H37.5" fill="none" stroke="#fff" stroke-width="1.3"/><path d="M33,9.2 L36.2,6.3 M33,9.2 L36.2,12" stroke="#fff" stroke-width="1.3" fill="none"/><path d="M47.2,10 L48.9,11.7 L50.6,10" stroke="#fff" stroke-width="0.9" fill="none"/><path d="M65.5,8.2 A4.2,4.2 0 1 1 60.5,7.6" stroke="#6f8ec2" stroke-width="1.2" fill="none"/><path d="M63.5,6.2 L66.8,6.6 L65.6,9.6" stroke="#6f8ec2" stroke-width="1.1" fill="none"/><rect x="80.2" y="8.6" width="4" height="1" fill="#fff"/><path d="M80.2,10.6 H84.3 L82.25,12.9 Z" fill="#fff"/><rect x="777.3" y="6.8" width="8.2" height="6" fill="none" stroke="#fff" stroke-width="1"/><path d="M779,11.5 H784" stroke="#fff" stroke-width="0.8"/><path d="M780.2,9.6 L781.4,8.2 L782.6,9.6" stroke="#fff" stroke-width="0.8" fill="none"/><rect x="808" y="9.1" width="7.2" height="0.9" fill="#fff"/><rect x="837.8" y="8.3" width="5.2" height="4.5" fill="none" stroke="#fff" stroke-width="1"/><path d="M839.6,8.3 V6.7 H845 V11 H843" fill="none" stroke="#fff" stroke-width="1"/><path d="M867.6,6.5 L874.8,13.3 M874.8,6.5 L867.6,13.3" stroke="#fff" stroke-width="1.1"/><path d="M866,26.7 H876.5 V33.2 H870 L867.8,35.4 V33.2 H866 Z" fill="none" stroke="#fff" stroke-width="1"/><path d="M522.5,34.2 C521.8,32 520.8,31 520.8,29.6 A3.6,3.6 0 0 1 528,29.6 C528,31 527,32 526.3,34.2 Z" fill="none" stroke="#fff" stroke-width="1"/><path d="M522.8,35.6 H526 L525.2,36.9 H523.6 Z" fill="#fff"/><rect x="11" y="48.7" width="15.3" height="16" fill="#f0c470" rx="0.6"/><rect x="14.1" y="48.2" width="9.4" height="2.8" fill="#555" rx="0.8"/><rect x="17.2" y="46.6" width="3.2" height="2" fill="#555" rx="0.8"/><path d="M19.9,54.4 H26.2 L28.9,57.1 V65.8 H19.9 Z" fill="#fff" stroke="#555" stroke-width="0.8"/><path d="M26.2,54.4 V57.1 H28.9" fill="none" stroke="#555" stroke-width="0.7"/><path d="M17.1,82.2 L18.8,83.9 L20.5,82.2" stroke="#555" stroke-width="0.8" fill="none"/><circle cx="36.8" cy="52.4" r="1.8" fill="none" stroke="#a8a8a8" stroke-width="0.8"/><circle cx="41.6" cy="52.4" r="1.8" fill="none" stroke="#a8a8a8" stroke-width="0.8"/><path d="M37.6,50.8 L42.8,45.9 M40.8,50.8 L35.6,45.9" stroke="#a8a8a8" stroke-width="0.8"/><path d="M34.6,61.2 H38.5 L39.6,62.3 V67.5 H34.6 Z M38.6,63 H42.6 L43.9,64.3 V69.6 H38.6 Z" fill="#f3f3f3" stroke="#b0b0b0" stroke-width="0.7"/><path d="M35,82.5 L38.5,79 L41,81.5 L37.5,85 Z" fill="#f0c470"/><path d="M38.8,79.2 L42.6,75.8 L44.6,77.8 L41.2,81.6 Z" fill="#505050"/><path d="M101.1,97.6 V93.4 H105.69999999999999" fill="none" stroke="#666" stroke-width="0.8"/><path d="M102.69999999999999,95 L105.1,97.4" stroke="#555" stroke-width="0.9"/><path d="M105.69999999999999,95.6 V98 H103.3 Z" fill="#555"/><path d="M293.1,97.6 V93.4 H297.70000000000005" fill="none" stroke="#666" stroke-width="0.8"/><path d="M294.70000000000005,95 L297.1,97.4" stroke="#555" stroke-width="0.9"/><path d="M297.70000000000005,95.6 V98 H295.3 Z" fill="#555"/><path d="M453.3,97.6 V93.4 H457.90000000000003" fill="none" stroke="#666" stroke-width="0.8"/><path d="M454.90000000000003,95 L457.3,97.4" stroke="#555" stroke-width="0.9"/><path d="M457.90000000000003,95.6 V98 H455.5 Z" fill="#555"/><path d="M758.2,97.6 V93.4 H762.8000000000001" fill="none" stroke="#666" stroke-width="0.8"/><path d="M759.8000000000001,95 L762.2,97.4" stroke="#555" stroke-width="0.9"/><path d="M762.8000000000001,95.6 V98 H760.4000000000001 Z" fill="#555"/><path d="M179.7,55 H183 L181.35,56.8 Z M208.8,55 H212 L210.4,56.8 Z" fill="#444"/><path d="M226,53.4 L227.4,51.8 L228.8,53.4 Z" fill="#2b6fc0"/><path d="M241.2,51.6 H244 L242.6,53.4 Z" fill="#2b6fc0"/><path d="M162.2,75.2 L164,76.9 L165.8,75.2 M237.5,75.4 L239.3,77.2 L241.1,75.4 M263.2,75.6 L265,77.4 L266.8,75.6 M288.8,75.6 L290.6,77.4 L292.4,75.6 M268.2,55.4 L270.1,57.2 L272,55.4" stroke="#555" stroke-width="0.8" fill="none"/><rect x="195" y="77" width="2.5" height="2.7" fill="#2b6fc0"/><rect x="211" y="72" width="2.2" height="2.8" fill="#2b6fc0"/><path d="M227.6,71.2 H230 L233.4,79.6 H231.2 L230.4,77.4 H227.2 L226.4,79.6 H224.2 Z M228.8,73.6 L227.8,76 H229.8 Z" fill="#fff" stroke="#3b78c0" stroke-width="0.9" stroke-linejoin="round"/><rect x="248.2" y="78.5" width="10.8" height="2.5" fill="#f4f000"/><path d="M252.6,77.4 L259,71.4" stroke="#444" stroke-width="1.4"/><text x="248.3" y="75.6" font-family="Liberation Sans" font-weight="bold" font-size="5.2" fill="#555">ab</text><rect x="273.8" y="78.5" width="10.3" height="2.5" fill="#e80000"/><path d="M276,77.7 L279.1,71.6 L282.2,77.7 M277.3,75.5 H280.9" stroke="#444" stroke-width="1" fill="none"/><path d="M287.8,58.5 L292.3,54 L294.2,55.9 L289.7,60.4 Z" fill="#e78a9e"/><path d="M287,60.6 L289.2,62.4" stroke="#e78a9e" stroke-width="1"/><path d="M284.6,58.5 L287,52.4 L289.2,57" stroke="#555" stroke-width="0.9" fill="none"/><circle cx="309.5" cy="51.3" r="0.9" fill="#2b6fc0"/><rect x="311.6" y="50.849999999999994" width="5.6" height="0.9" fill="#555"/><rect x="333.8" y="50.099999999999994" width="1.8" height="2.4" fill="#2b6fc0"/><rect x="337.2" y="50.849999999999994" width="6" height="0.9" fill="#555"/><circle cx="309.5" cy="55.4" r="0.9" fill="#2b6fc0"/><rect x="311.6" y="54.949999999999996" width="5.6" height="0.9" fill="#555"/><rect x="333.8" y="54.199999999999996" width="1.8" height="2.4" fill="#2b6fc0"/><rect x="337.2" y="54.949999999999996" width="6" height="0.9" fill="#555"/><circle cx="309.5" cy="59.2" r="0.9" fill="#2b6fc0"/><rect x="311.6" y="58.75" width="5.6" height="0.9" fill="#555"/><rect x="333.8" y="58.0" width="1.8" height="2.4" fill="#2b6fc0"/><rect x="337.2" y="58.75" width="6" height="0.9" fill="#555"/><rect x="358.4" y="50.1" width="1.7" height="2.4" fill="#2b6fc0"/><rect x="361" y="50.9" width="8" height="0.9" fill="#555"/><rect x="361.6" y="54.2" width="1.7" height="2.4" fill="#2b6fc0"/><rect x="364.2" y="55" width="4.8" height="0.9" fill="#555"/><rect x="364.3" y="58" width="1.1" height="2.8" fill="#2b6fc0"/><rect x="367" y="58.8" width="2" height="0.9" fill="#555"/><path d="M323.1,55.6 L325,57.3 L326.9,55.6 M348.4,55.6 L350.3,57.3 L352.2,55.6 M372.6,55.6 L374.4,57.3 L376.2,55.6 M388.8,75.8 L390.6,77.6 L392.4,75.8 M419.4,75.8 L421.2,77.6 L423,75.8 M444.6,75.8 L446.4,77.6 L448.2,75.8" stroke="#555" stroke-width="0.8" fill="none"/><rect x="308.8" y="72.14999999999999" width="8.7" height="0.9" fill="#8a8a8a"/><rect x="324.7" y="72.14999999999999" width="8" height="0.9" fill="#8a8a8a"/><rect x="340.2" y="72.14999999999999" width="8.7" height="0.9" fill="#8a8a8a"/><rect x="308.8" y="74.14999999999999" width="6" height="0.9" fill="#8a8a8a"/><rect x="325.7" y="74.14999999999999" width="6" height="0.9" fill="#8a8a8a"/><rect x="342.9" y="74.14999999999999" width="6" height="0.9" fill="#8a8a8a"/><rect x="308.8" y="76.14999999999999" width="8.7" height="0.9" fill="#8a8a8a"/><rect x="324.7" y="76.14999999999999" width="8" height="0.9" fill="#8a8a8a"/><rect x="340.2" y="76.14999999999999" width="8.7" height="0.9" fill="#8a8a8a"/><rect x="308.8" y="78.25" width="6" height="0.9" fill="#8a8a8a"/><rect x="325.7" y="78.25" width="6" height="0.9" fill="#8a8a8a"/><rect x="342.9" y="78.25" width="6" height="0.9" fill="#8a8a8a"/><rect x="353.3" y="69.1" width="13.4" height="14.1" fill="#c8c8c8" stroke="#8c8c8c" stroke-width="0.9"/><rect x="355.8" y="71.89999999999999" width="8.4" height="0.8" fill="#7a7a7a"/><rect x="355.8" y="73.89999999999999" width="8.4" height="0.8" fill="#7a7a7a"/><rect x="355.8" y="75.89999999999999" width="8.4" height="0.8" fill="#7a7a7a"/><rect x="355.8" y="77.89999999999999" width="8.4" height="0.8" fill="#7a7a7a"/><rect x="355.8" y="79.8" width="8.4" height="0.8" fill="#7a7a7a"/><path d="M377,71 V80.6" stroke="#2b6fc0" stroke-width="0.8"/><path d="M375,73 L377,70.6 L379,73 Z M375,78.6 L377,81 L379,78.6 Z" fill="#2b6fc0"/><rect x="380.3" y="72.05" width="5" height="0.9" fill="#8a8a8a"/><rect x="380.3" y="74.14999999999999" width="5" height="0.9" fill="#8a8a8a"/><rect x="380.3" y="76.25" width="5" height="0.9" fill="#8a8a8a"/><rect x="380.3" y="78.35" width="5" height="0.9" fill="#8a8a8a"/><rect x="387.7" y="50.7" width="10.5" height="0.9" fill="#555"/><rect x="387.7" y="59.3" width="10.5" height="0.9" fill="#555"/><rect x="392.2" y="53.15" width="6" height="0.9" fill="#555"/><rect x="392.2" y="54.949999999999996" width="6" height="0.9" fill="#555"/><rect x="392.2" y="56.849999999999994" width="6" height="0.9" fill="#555"/><path d="M387.7,55.4 L390.09999999999997,53.4 V57.4 Z" fill="#2b6fc0"/><rect x="389.7" y="54.9" width="2" height="1" fill="#2b6fc0"/><rect x="403.3" y="50.7" width="10.5" height="0.9" fill="#555"/><rect x="403.3" y="59.3" width="10.5" height="0.9" fill="#555"/><rect x="407.8" y="53.15" width="6" height="0.9" fill="#555"/><rect x="407.8" y="54.949999999999996" width="6" height="0.9" fill="#555"/><rect x="407.8" y="56.849999999999994" width="6" height="0.9" fill="#555"/><path d="M407.2,55.4 L404.8,53.4 V57.4 Z" fill="#2b6fc0"/><rect x="403.3" y="54.9" width="2" height="1" fill="#2b6fc0"/><text x="424.6" y="55.5" font-family="Liberation Sans" font-weight="bold" font-size="6" fill="#2b6fc0">A</text><text x="424.8" y="60.8" font-family="Liberation Sans" font-weight="bold" font-size="6" fill="#9b59c0">Z</text><path d="M431.9,51 V60" stroke="#555" stroke-width="0.9"/><path d="M429.9,57.6 L431.9,60.3 L433.9,57.6" stroke="#555" stroke-width="0.9" fill="none"/><path d="M449.2,52.3 V59.7 M451.2,52.3 V59.7" stroke="#555" stroke-width="1"/><path d="M451.6,52.3 H448.2 A2.2,2.2 0 0 0 448.2,56.7 H449.2 Z" fill="#555"/><path d="M406.5,77.2 L409.5,71 L413.6,75.2 L410.8,78.6 Z" fill="#fff" stroke="#555" stroke-width="0.8"/><circle cx="413.8" cy="76.2" r="1.2" fill="#2b6fc0"/><rect x="404.2" y="79" width="10.5" height="2" fill="#fff" stroke="#888" stroke-width="0.6"/><rect x="430.3" y="71.4" width="8.2" height="8.2" fill="none" stroke="#999" stroke-width="0.9"/><path d="M434.4,71.4 V79.6 M430.3,75.5 H438.5" stroke="#c4c4c4" stroke-width="0.8"/><circle cx="779.7" cy="49.6" r="2.5" fill="none" stroke="#2b6fc0" stroke-width="1.2"/><path d="M777.8,51.6 L774.3,54" stroke="#2b6fc0" stroke-width="1.5"/><path d="M815.8,50.6 L817.5,52.1 L819.2,50.6 M827.6,80.2 L829,81.5 L830.4,80.2" stroke="#666" stroke-width="0.8" fill="none"/><text x="773" y="64.3" font-family="Liberation Sans" font-size="6" fill="#555">a</text><text x="776.5" y="64.3" font-family="Liberation Sans" font-size="6.4" fill="#9b59c0">b</text><text x="775.8" y="70.2" font-family="Liberation Sans" font-size="5.6" fill="#666">a</text><text x="779" y="70.2" font-family="Liberation Sans" font-size="6" fill="#2b6fc0">c</text><path d="M773.4,66 L775,67.5 L776.4,66" stroke="#2b6fc0" stroke-width="0.8" fill="none"/><path d="M775.8,75.2 V83.6 L777.9,81.6 L779.4,84.8 L780.7,84.2 L779.3,81.1 L781.8,81 Z" fill="#fff" stroke="#777" stroke-width="0.8"/><path d="M752.3,54 L753.9,52.6 L755.5,54" stroke="#b5b5b5" stroke-width="0.8" fill="none"/><path d="M752.4,64.8 H755.5 L753.95,66.5 Z" fill="#444"/><rect x="752.4" y="75.8" width="3.1" height="0.8" fill="#444"/><path d="M752.4,77.6 H755.5 L753.95,79.3 Z" fill="#444"/><path d="M872,98 L876,94 L880,98" stroke="#555" stroke-width="0.9" fill="none"/><path d="M877.6,109.5 L880.1,106.8 L882.6,109.5 Z M877.6,450.3 H882.6 L880.1,453 Z" fill="#555"/><path d="M140.6,460.8 H144.6 V467.6 H140.6 Z M145,460.8 H148.8 V467.6 H145 Z" fill="none" stroke="#666" stroke-width="0.8"/><path d="M145.6,462.8 L148.2,465.6 M148.2,462.8 L145.6,465.6" stroke="#555" stroke-width="0.8"/><path d="M166,461.5 A4.6,4.6 0 1 0 170.5,468" fill="none" stroke="#555" stroke-width="0.9"/><circle cx="168.8" cy="464" r="0.9" fill="#555"/><path d="M166.8,465.3 L168.8,466.5 L171.5,465 M168.8,466.5 L168.2,469 M168.8,466.5 L170,469" stroke="#555" stroke-width="0.8" fill="none"/><path d="M700.2,461 H704 V468.5 H700.2 Z M704.4,461 H708.3 V468.5 H704.4 Z" fill="#c9c9c9" stroke="#909090" stroke-width="0.6"/><rect x="726" y="461" width="8.6" height="8" fill="#a8a8a8" stroke="#8a8a8a" stroke-width="0.7"/><rect x="751.8" y="461" width="7.6" height="7.6" fill="#d8d8d8" stroke="#909090" stroke-width="0.7"/><circle cx="758.6" cy="467.2" r="2" fill="#f3f3f3" stroke="#666" stroke-width="0.8"/><rect x="772.9" y="464.6" width="5" height="0.9" fill="#555"/><rect x="781.6" y="464.6" width="64.4" height="0.8" fill="#555"/><rect x="805.8" y="460.5" width="2.4" height="8.5" fill="#333"/><rect x="813.6" y="462.6" width="0.8" height="4.6" fill="#555"/><rect x="849.8" y="464.6" width="5" height="0.9" fill="#555"/><rect x="851.85" y="462.6" width="0.9" height="5" fill="#555"/></svg>
<div class="a" style="left:118.40px;top:70.47px;font-size:8.4px;line-height:10.08px;color:#333;font-family:'Liberation Sans',sans-serif;font-weight:bold;-webkit-text-stroke:0.12px #333;transform:scaleX(0.9561);transform-origin:0 0;">N</div>
<div class="a" style="left:133.70px;top:70.47px;font-size:8.4px;line-height:10.08px;color:#333;font-family:'Liberation Sans',sans-serif;font-weight:bold;-webkit-text-stroke:0.12px #333;transform:scaleX(0.8902);transform-origin:0 0;font-style:italic;">K</div>
<div class="a" style="left:150.00px;top:70.47px;font-size:8.4px;line-height:10.08px;color:#333;font-family:'Liberation Sans',sans-serif;font-weight:bold;-webkit-text-stroke:0.12px #333;transform:scaleX(0.8924);transform-origin:0 0;text-decoration:underline;">S</div>
<div class="a" style="left:172.20px;top:71.11px;font-size:8px;line-height:9.60px;color:#555;font-family:'Liberation Sans',sans-serif;-webkit-text-stroke:0.12px #555;transform:scaleX(0.8373);transform-origin:0 0;text-decoration:line-through;">abc</div>
<div class="a" style="left:189.60px;top:70.43px;font-size:9.5px;line-height:11.40px;color:#333;font-family:'Liberation Sans',sans-serif;font-weight:bold;-webkit-text-stroke:0.12px #333;transform:scaleX(1.0220);transform-origin:0 0;">x</div>
<div class="a" style="left:205.00px;top:70.43px;font-size:9.5px;line-height:11.40px;color:#333;font-family:'Liberation Sans',sans-serif;font-weight:bold;-webkit-text-stroke:0.12px #333;transform:scaleX(1.1356);transform-origin:0 0;">x</div>
<div class="a" style="left:220.50px;top:50.93px;font-size:9.5px;line-height:11.40px;color:#444;font-family:'Liberation Sans',sans-serif;-webkit-text-stroke:0.12px #444;transform:scaleX(1.0415);transform-origin:0 0;">A</div>
<div class="a" style="left:236.50px;top:52.63px;font-size:7.8px;line-height:9.36px;color:#444;font-family:'Liberation Sans',sans-serif;-webkit-text-stroke:0.12px #444;transform:scaleX(1.0763);transform-origin:0 0;">A</div>
<div class="a" style="left:254.10px;top:50.14px;font-size:8.8px;line-height:10.56px;color:#444;font-family:'Liberation Sans',sans-serif;-webkit-text-stroke:0.12px #444;transform:scaleX(0.9383);transform-origin:0 0;">Aa</div>
</body></html>
